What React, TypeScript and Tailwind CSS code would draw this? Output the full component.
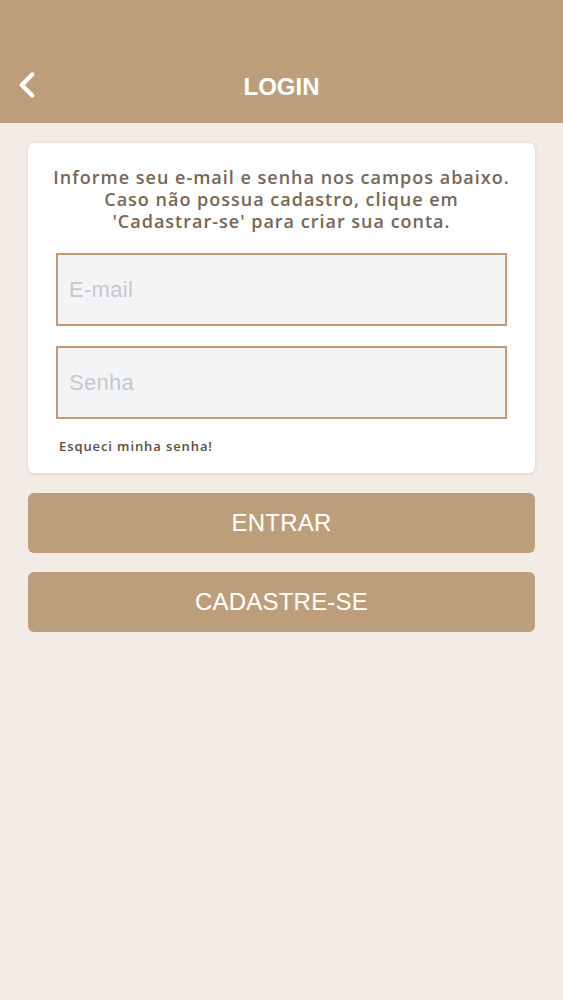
import { ChevronLeft } from "lucide-react";

export default function App() {
  return (
    <div
      className="min-h-[1000px] w-full bg-[#f2ebe6] pb-10"
      style={{ fontFamily: "'Liberation Sans', Arial, sans-serif" }}
    >
      <header className="relative flex h-[123px] items-end justify-center bg-[#bc9f7a] pb-[18px]">
        <button className="absolute bottom-[17px] left-[6px] text-white">
          <ChevronLeft size={42} strokeWidth={2.5} />
        </button>
        <h1 className="text-[24px] font-bold text-white">LOGIN</h1>
      </header>

      <main className="px-[28px] pt-[20px]">
        <section className="rounded-[6px] bg-white px-[28px] pb-[16px] pt-[23px] shadow-[0_1px_4px_rgba(0,0,0,0.12)]">
          <p
            className="-mx-[12px] whitespace-nowrap text-center text-[18px] font-semibold leading-[22px] tracking-[1px] text-[#776756]"
            style={{ fontFamily: "'Open Sans', sans-serif" }}
          >
            Informe seu e-mail e senha nos campos abaixo.
            <br />
            Caso não possua cadastro, clique em
            <br />
            'Cadastrar-se' para criar sua conta.
          </p>

          <div className="mt-[21px] flex flex-col gap-[20px]">
            <input
              type="email"
              placeholder="E-mail"
              className="h-[73px] w-full border-2 border-[#c19b70] bg-[#f3f4f6] px-[11px] text-[22px] tracking-[0.3px] text-[#555] placeholder:text-[#c6c8cc] outline-none"
            />
            <input
              type="password"
              placeholder="Senha"
              className="h-[73px] w-full border-2 border-[#c19b70] bg-[#f3f4f6] px-[11px] text-[22px] tracking-[0.3px] text-[#555] placeholder:text-[#c6c8cc] outline-none"
            />
          </div>

          <a
            className="mt-[18px] block pl-[3px] text-[13px] font-semibold tracking-[0.9px] text-[#5b4d40]"
            style={{ fontFamily: "'Open Sans', sans-serif" }}
          >
            Esqueci minha senha!
          </a>
        </section>

        <div className="mt-[20px] flex flex-col gap-[19px]">
          <button className="h-[60px] w-full rounded-[6px] bg-[#bc9f7a] text-[24px] tracking-[0.2px] text-white">
            ENTRAR
          </button>
          <button className="h-[60px] w-full rounded-[6px] bg-[#bc9f7a] text-[24px] tracking-[0.2px] text-white">
            CADASTRE-SE
          </button>
        </div>
      </main>
    </div>
  );
}
